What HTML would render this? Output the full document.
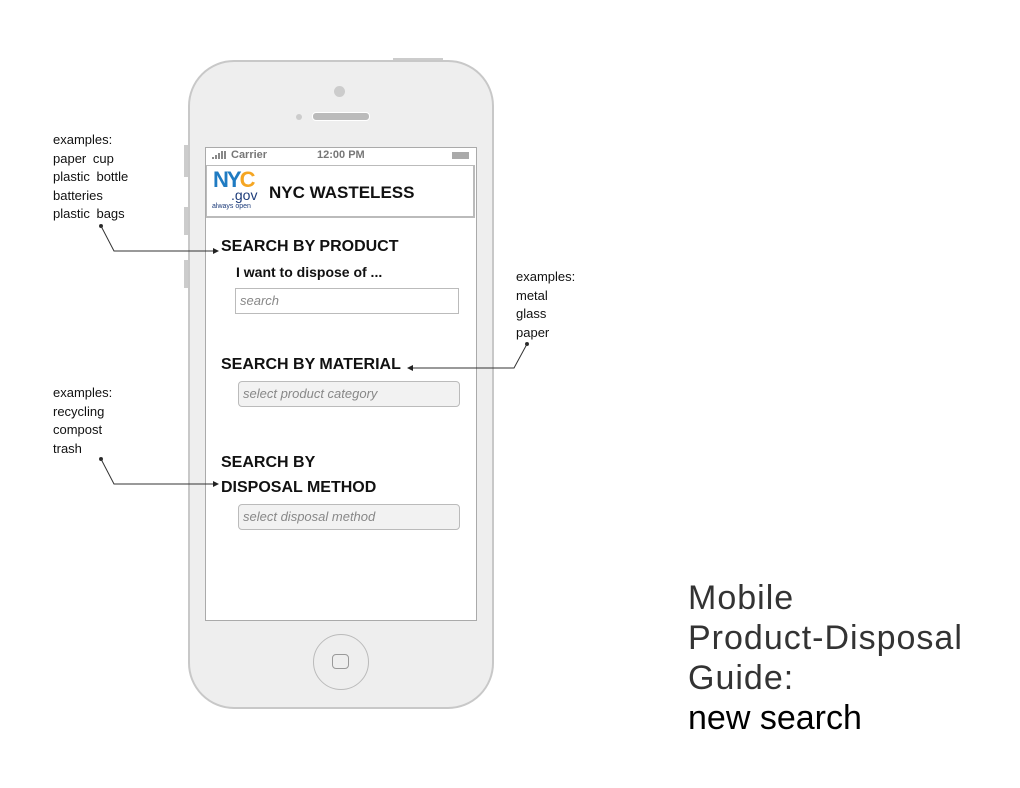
<!DOCTYPE html>
<html><head><meta charset="utf-8"><style>
body{margin:0;width:1020px;height:788px;background:#fff;position:relative;overflow:hidden;font-family:"Liberation Sans",sans-serif}
.a{position:absolute}
.ann{font-size:13px;line-height:18.5px;color:#111;word-spacing:3px}
.b{font-weight:bold;color:#111}
.field{position:absolute;border:1px solid #bbb;font-style:italic;color:#888;font-size:13px;box-sizing:border-box;padding-left:4px}
</style></head><body>
<div class="a" style="left:393px;top:58px;width:50px;height:3px;background:#ccc"></div>
<div class="a" style="left:184px;top:145px;width:4px;height:32px;background:#ccc"></div>
<div class="a" style="left:184px;top:207px;width:4px;height:28px;background:#ccc"></div>
<div class="a" style="left:184px;top:260px;width:4px;height:28px;background:#ccc"></div>
<div class="a" style="left:188px;top:60px;width:302px;height:645px;border:2px solid #c8c8c8;border-radius:46px;background:#eee"></div>
<div class="a" style="left:334px;top:86px;width:11px;height:11px;border-radius:50%;background:#ccc"></div>
<div class="a" style="left:296px;top:114px;width:6px;height:6px;border-radius:50%;background:#ccc"></div>
<div class="a" style="left:312px;top:112px;width:56px;height:7px;border-radius:4px;background:#bbb;border:1px solid #fff"></div>
<div class="a" style="left:313px;top:634px;width:54px;height:54px;border-radius:50%;border:1px solid #bbb;background:#eee"></div>
<div class="a" style="left:332px;top:654px;width:15px;height:13px;border-radius:4px;border:1px solid #999"></div>
<div class="a" style="left:205px;top:147px;width:270px;height:472px;border:1px solid #aaa;background:#fff"></div>
<div class="a" style="left:206px;top:148px;width:270px;height:15px;font-size:11px;color:#777;font-weight:bold">
 <span class="a" style="left:6px;top:9px;width:2px;height:2px;background:#888"></span>
 <span class="a" style="left:9px;top:7px;width:2px;height:4px;background:#888"></span>
 <span class="a" style="left:12px;top:5px;width:2px;height:6px;background:#888"></span>
 <span class="a" style="left:15px;top:3px;width:2px;height:8px;background:#888"></span>
 <span class="a" style="left:18px;top:3px;width:2px;height:8px;background:#888"></span>
 <span class="a" style="left:25px;top:1px">Carrier</span>
 <span class="a" style="left:111px;top:1px">12:00 PM</span>
 <span class="a" style="left:246px;top:4px;width:17px;height:7px;background:#aaa"></span>
</div>
<div class="a" style="left:206px;top:165px;width:266px;height:50px;border:1px solid #aaa;border-width:1px 2px 2px 1px;border-color:#bbb"></div>
<div class="a" style="left:213px;top:170px;font-size:22px;font-weight:900;letter-spacing:-2px;line-height:20px"><span style="color:#1f7bc2">NY</span><span style="color:#f5a623">C</span></div>
<div class="a" style="left:231px;top:188px;font-size:14px;color:#1d3c7a;line-height:14px">.gov</div>
<div class="a" style="left:212px;top:203px;font-size:7px;color:#1d3c7a">always open</div>
<div class="a b" style="left:269px;top:183px;font-size:17px">NYC WASTELESS</div>
<div class="a b" style="left:221px;top:238px;font-size:16px">SEARCH BY PRODUCT</div>
<div class="a b" style="left:236px;top:264px;font-size:14px">I want to dispose of ...</div>
<div class="field" style="left:235px;top:288px;width:224px;height:26px;line-height:24px">search</div>
<div class="a b" style="left:221px;top:356px;font-size:16px">SEARCH BY MATERIAL</div>
<div class="field" style="left:238px;top:381px;width:222px;height:26px;line-height:24px;background:#f2f2f2;border-radius:4px">select product category</div>
<div class="a b" style="left:221px;top:450px;font-size:16px;line-height:25px">SEARCH BY<br>DISPOSAL METHOD</div>
<div class="field" style="left:238px;top:504px;width:222px;height:26px;line-height:24px;background:#f2f2f2;border-radius:4px">select disposal method</div>
<div class="a ann" style="left:53px;top:131px">examples:<br>paper cup<br>plastic bottle<br>batteries<br>plastic bags</div>
<div class="a ann" style="left:516px;top:268px">examples:<br>metal<br>glass<br>paper</div>
<div class="a ann" style="left:53px;top:384px">examples:<br>recycling<br>compost<br>trash</div>
<svg class="a" style="left:0;top:0" width="1020" height="788">
<defs><marker id="m" markerWidth="6" markerHeight="6" refX="5" refY="3" orient="auto"><path d="M0,0L6,3L0,6z" fill="#222"/></marker></defs>
<g stroke="#333" stroke-width="1" fill="none">
<circle cx="101" cy="226" r="1.5" fill="#222"/><polyline points="101,226 114,251 218,251" marker-end="url(#m)"/>
<circle cx="527" cy="344" r="1.5" fill="#222"/><polyline points="527,344 514,368 408,368" marker-end="url(#m)"/>
<circle cx="101" cy="459" r="1.5" fill="#222"/><polyline points="101,459 114,484 218,484" marker-end="url(#m)"/>
</g></svg>
<div class="a" style="left:688px;top:578px;font-size:34px;line-height:40px;color:#333;letter-spacing:1px">Mobile<br>Product-Disposal<br>Guide:<br><span style="color:#000;letter-spacing:0">new search</span></div>
</body></html>
